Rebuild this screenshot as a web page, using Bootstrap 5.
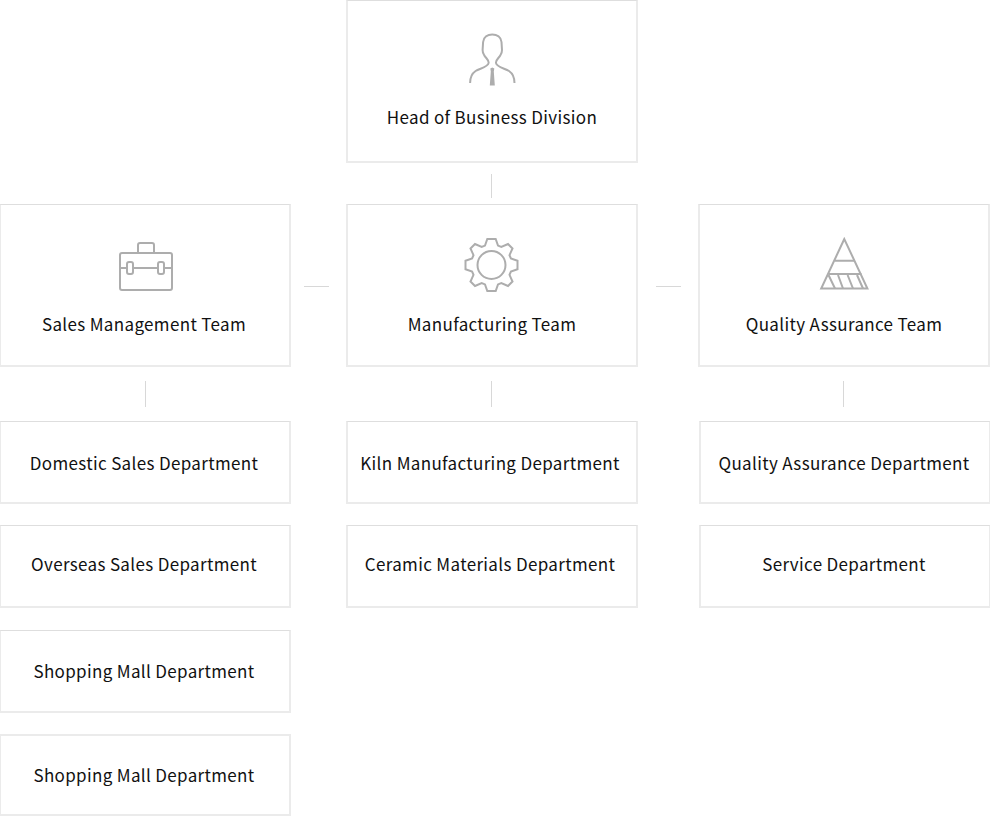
<!DOCTYPE html>
<html lang="en"><head><meta charset="utf-8">
<link href="https://cdn.jsdelivr.net/npm/bootstrap@5.3.0/dist/css/bootstrap.min.css" rel="stylesheet">
<style>
html,body{margin:0;background:#fff;overflow:hidden}
body{font-family:"Noto Sans CJK KR","Noto Sans",sans-serif;font-size:17px;letter-spacing:.34px;color:#111;width:990px;height:816px}
.chart{display:grid;grid-template-columns:292px 55px 292px 60px 292px;width:991px;margin-left:-1px}
.nodebox{box-sizing:border-box;background:#fff;border-style:solid;border-color:#dedede #ebebeb #ebebeb;border-width:1px 2px 2px;text-align:center;line-height:26px}
.bigbox{height:163px;display:flex;flex-direction:column;align-items:center;padding-top:29px}
.bigbox svg{display:block;flex:none;margin-bottom:17px;overflow:visible}
.bigbox.headbox svg{margin-bottom:14px}
.deptbox{height:83px;display:flex;align-items:center;justify-content:center}
.softtop{border-top:2px solid #ebebeb;height:82px}
.lower{padding-top:2px}
.upper{padding-bottom:4px}
.pull-a{padding-right:2px}
.pull-b{padding-right:4px}
.pull-c{padding-right:2px}
.vline{width:1px;height:26px;background:#d8d8d8}
.vshort{height:24px}
.hline{width:25px;height:1px;background:#d8d8d8;margin-top:2px}
.hshift{padding-right:4px}
.col-mid{grid-column:3}
.stack{display:flex;flex-direction:column}
.ic{fill:none;stroke:#adadad;stroke-width:2}
.headlink{padding:11px 0 6px 145px}
.lnk-a,.lnk-b,.lnk-c{padding-top:14px;padding-bottom:14px}
.lnk-a{padding-left:146px}
.lnk-b{padding-left:145px}
.lnk-c{padding-left:144px}
.gap-a{margin-top:21px}
.gap-b{margin-top:22px}
.shift-r{margin-left:1px;margin-right:-1px}
</style></head><body>
<div class="chart">
  <div class="stack col-mid">
    <div class="nodebox bigbox headbox">
      <svg width="60" height="60" viewBox="0 0 60 60"><g transform="translate(.6 0)"><path class="ic" d="M7.500 53C7.500 46 10 43 13 41C17 38.500 25.500 37 26 33C26.500 30 23 28 21.500 25C20 23 20 22 20 20L20.500 12C21 7 25 4.500 29.700 4.500C34.400 4.500 38.400 7 38.900 12L39.400 20C39.400 22 39.400 23 37.900 25C36.400 28 32.900 30 33.400 33C33.900 37 42.400 38.500 46.400 41C49.400 43 51.900 46 51.900 53"/><path fill="#adadad" d="M27.700 38.500l2-1 2 1-.5 3 1 14h-5l1-14z"/></g></svg>
      <span>Head of Business Division</span>
    </div>
    <div class="d-flex headlink"><div class="vline vshort"></div></div>
  </div>
</div>
<div class="chart">
  <div class="nodebox bigbox pull-a">
    <svg width="60" height="60" viewBox="0 0 60 60"><g class="ic" transform="translate(1 0)"><path d="M23 19V11q0-2 2-2h12q2 0 2 2v8"/><rect x="5" y="19" width="52" height="37" rx="2"/><path d="M5 34h7M18 34h25M49 34h8"/><rect x="12" y="28" width="6" height="12" rx="2"/><rect x="43" y="28" width="6" height="12" rx="2"/></g></svg>
    <span>Sales Management Team</span>
  </div>
  <div class="d-flex justify-content-center align-items-center hshift"><div class="hline"></div></div>
  <div class="nodebox bigbox">
    <svg width="60" height="60" viewBox="0 0 60 60"><g class="ic" transform="translate(29.500 31)"><circle r="14"/><path d="M4.200-26L6.500-19.400L9.800-18L16.500-21L21-16.500L18-9.800L19.400-6.500L26-4.200V4.200L19.400 6.500L18 9.800L21 16.500L16.500 21L9.800 18L6.500 19.400L4.200 26H-4.200L-6.500 19.400L-9.800 18L-16.500 21L-21 16.500L-18 9.800L-19.400 6.500L-26 4.200V-4.200L-19.400-6.500L-18-9.800L-21-16.500L-16.500-21L-9.800-18L-6.500-19.400L-4.200-26Z"/></g></svg>
    <span>Manufacturing Team</span>
  </div>
  <div class="d-flex justify-content-center align-items-center"><div class="hline"></div></div>
  <div class="nodebox bigbox">
    <svg width="60" height="60" viewBox="0 0 60 60"><g class="ic"><path d="M30.300 5 7.200 54.500h46.200z"/><path d="M21 26.700h19M14.500 40h33M14.500 41l6.500 13.500M24 41l5 13.500M33.600 41l5.400 13.500M43 41l6 13.500"/></g></svg>
    <span>Quality Assurance Team</span>
  </div>
</div>
<div class="chart">
  <div class="stack">
    <div class="d-flex lnk-a"><div class="vline"></div></div>
    <div class="nodebox deptbox lower pull-a">Domestic Sales Department</div>
    <div class="nodebox deptbox gap-a upper pull-a">Overseas Sales Department</div>
    <div class="nodebox deptbox gap-b pull-a">Shopping Mall Department</div>
    <div class="nodebox deptbox gap-a softtop pull-a">Shopping Mall Department</div>
  </div>
  <div></div>
  <div class="stack">
    <div class="d-flex lnk-b"><div class="vline"></div></div>
    <div class="nodebox deptbox lower pull-b">Kiln Manufacturing Department</div>
    <div class="nodebox deptbox gap-a upper pull-b">Ceramic Materials Department</div>
  </div>
  <div></div>
  <div class="stack shift-r">
    <div class="d-flex lnk-c"><div class="vline"></div></div>
    <div class="nodebox deptbox lower pull-c">Quality Assurance Department</div>
    <div class="nodebox deptbox gap-a upper pull-c">Service Department</div>
  </div>
</div>
</body></html>
